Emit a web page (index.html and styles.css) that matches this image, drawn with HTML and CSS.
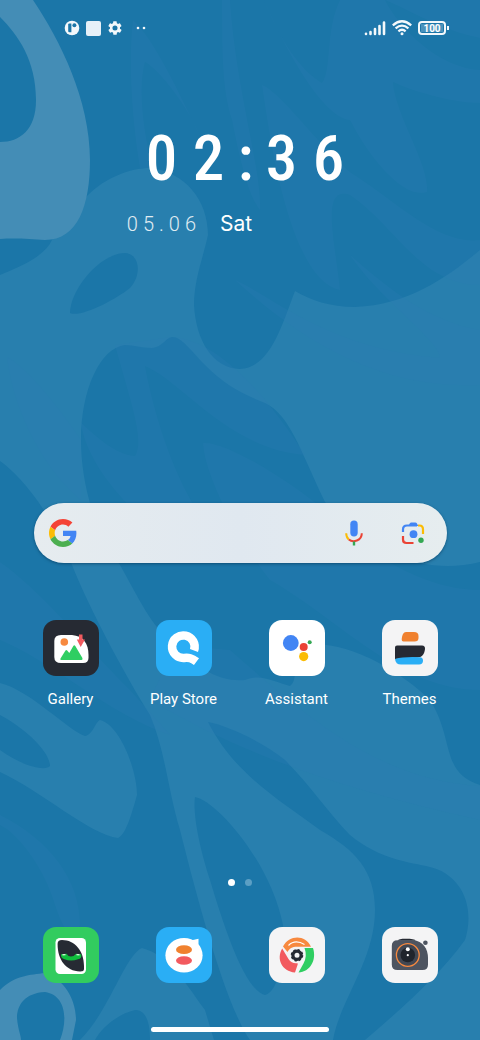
FILE: index.html
```
<!DOCTYPE html>
<html lang="en">
<head>
    <meta charset="UTF-8">
    <meta name="viewport" content="width=device-width, initial-scale=1.0">
    <title>Home screen</title>
    <link rel="stylesheet" href="styles.css">
</head>
<body>
    <!-- Wallpaper -->
    <svg class="wallpaper" viewBox="0 0 480 1040" preserveAspectRatio="xMidYMid slice" aria-hidden="true">
        <path class="light" d="M0 275C25 265 45 255 52 240C62 222 75 207 88 195C105 178 130 168 150 168C185 172 208 200 208 235C203 258 194 280 194 305C196 340 212 368 240 369C270 368 282 325 295 291C310 300 330 307 355 307C410 305 450 275 480 250V562C430 574 380 560 325 502C300 450 290 415 265 403C240 393 225 385 205 365C190 350 182 337 172 337C165 338 163 347 152 348C140 348 135 345 125 345C100 348 81 390 81 440C81 480 93 530 120 565C140 600 150 625 175 645C200 670 220 682 245 680C260 673 275 682 290 686C300 680 290 650 310 645C345 640 400 670 430 700C455 740 440 772 480 785V1040H250C225 1005 195 890 180 830C168 790 165 750 150 715C125 675 90 610 72 565C50 510 20 475 0 461Z"/>
        <path class="dark" d="M70 313C70 290 100 253 125 253C140 254 142 275 130 288C115 300 80 318 70 313Z"/>
        <path class="dark" d="M208 722C225 725 260 740 285 760C310 785 330 815 350 835C380 860 410 862 430 867C460 874 476 905 465 940C440 975 400 1010 365 1040H333C340 1000 375 960 375 910C375 870 355 850 320 830C280 800 235 775 208 722Z"/>
        <path class="dark" d="M195 797C215 800 270 860 283 925C285 960 278 992 265 995C245 990 225 930 210 880C197 840 193 810 195 797Z"/>
        <path class="light" d="M0 683C30 690 70 732 85 736C93 735 95 722 100 720C120 725 137 770 137 795C130 820 125 835 118 838C90 835 40 790 0 772V750C20 765 45 772 50 766C50 750 20 725 0 715Z"/>
        <path class="light" d="M80 1040C110 1010 125 955 142 948C170 955 190 990 205 1010L214 1040H150C150 1020 145 1010 135 1010C115 1015 100 1030 95 1040Z"/>
        <path class="pale" d="M33 0C60 40 90 100 90 160C90 205 78 240 45 240C30 239 15 238 0 239V142C20 142 36 130 36 100C36 60 18 35 0 17V0Z"/>
        <path class="pale" d="M0 990C15 975 30 975 45 973C65 980 76 1000 76 1020L72 1040H60C68 1020 66 995 45 992C25 993 17 1005 17 1018C18 1030 21 1035 21 1040H0Z"/>
        <g class="streaks">
            <path d="M222 0C222 50 222 90 232 120C240 160 248 195 260 210C262 170 236 90 230 0Z"/>
            <path d="M264 0C280 40 300 70 322 83C332 70 325 30 340 0H480V38C440 30 410 10 385 0C400 30 440 68 480 70V103C450 103 410 90 393 82C395 115 430 165 427 192C405 200 370 160 350 120C325 118 290 60 264 0Z"/>
            <path d="M133 20C128 60 132 120 140 168L153 168C145 140 137 90 145 62C160 70 190 110 200 136C180 95 155 40 133 20Z"/>
            <path d="M262 85C280 90 330 160 356 176C400 205 440 245 480 240V285C420 285 395 225 350 195C320 185 335 240 340 290C290 280 270 140 262 85Z"/>
            <path d="M235 280C270 295 330 350 440 358C440 340 380 300 350 255C390 290 430 322 480 330V385C380 390 300 340 235 280Z"/>
            <path d="M115 345C130 400 145 440 135 456C115 455 95 435 81 423C85 460 130 520 180 540H220C180 500 155 420 145 366C180 380 230 450 305 455C270 400 220 340 172 337Z"/>
            <path d="M203 443C230 440 320 500 345 530C390 570 440 590 480 590V690C400 690 340 620 270 580C245 550 205 480 203 443Z"/>
            <path d="M0 562C40 590 80 640 130 690L170 735C110 715 50 660 0 640Z"/>
            <path d="M150 700C220 740 300 780 480 820V786C380 780 310 720 230 650L175 645Z"/>
            <path d="M0 815C50 840 80 880 80 925C72 950 60 920 55 905C45 870 20 835 0 825Z"/>
            <path d="M7 357C30 370 60 410 81 440V500C50 475 15 420 7 357Z"/>
        </g>
    </svg>

    <!-- Status bar -->
    <header class="status-bar">
        <div class="notifications">
            <svg width="16" height="16" viewBox="0 0 16 16"><circle cx="8" cy="8" r="7.3" fill="#f3f8fb"/><path d="M4.2 4.6Q4.2 3.4 5.4 3.4H7.4V12.2H5.4Q4.2 12.2 4.2 11Z" fill="#1b76a8"/><circle cx="10.4" cy="5.3" r="2" fill="#1b76a8"/></svg>
            <span class="square-note"></span>
            <svg width="16" height="16" viewBox="0 0 24 24"><path fill="#f3f8fb" d="M19.400 13c0-.3.1-.6.1-1s0-.7-.1-1l2.100-1.700c.2-.1.200-.4.100-.6l-2-3.500c-.1-.2-.4-.3-.6-.2l-2.500 1c-.5-.4-1.100-.7-1.700-1l-.4-2.600c0-.2-.2-.4-.5-.4h-4c-.2 0-.4.200-.5.4l-.4 2.600c-.6.3-1.200.6-1.700 1l-2.500-1c-.2-.1-.5 0-.6.200l-2 3.500c-.1.200-.1.500.1.600L4.500 11c0 .3-.1.700-.1 1s0 .7.100 1l-2.100 1.700c-.2.100-.2.400-.1.600l2 3.500c.1.200.4.300.6.200l2.500-1c.5.400 1.100.7 1.700 1l.4 2.600c0 .2.200.4.500.4h4c.2 0 .5-.2.500-.4l.4-2.600c.6-.3 1.200-.6 1.700-1l2.500 1c.2.100.5 0 .6-.2l2-3.500c.1-.2.100-.5-.1-.6L19.400 13zM12 15.800a3.800 3.800 0 1 1 0-7.600 3.800 3.800 0 0 1 0 7.600z"/></svg>
            <svg width="12" height="16" viewBox="0 0 12 16" fill="#f3f8fb"><circle cx="3" cy="8" r="1.300"/><circle cx="9" cy="8" r="1.300"/></svg>
        </div>
        <div class="signals">
            <svg width="22" height="16" viewBox="0 0 22 16" stroke="#f3f8fb" stroke-width="2.600" stroke-linecap="round"><path d="M2 14V13.700M6.500 14V12M11 14V9M15.500 14V6M20 14V2.500"/></svg>
            <svg width="20" height="16" viewBox="0 0 20 16" fill="none" stroke="#f3f8fb" stroke-width="2.300"><path d="M.8 5.300Q10-2.800 19.200 5.300M3.600 8.400Q10 2.800 16.400 8.400M6.400 11.400Q10 8.200 13.600 11.400"/><circle cx="10" cy="13.700" r="1.500" fill="#f3f8fb" stroke="none"/></svg>
            <div class="battery"><span class="battery-level">100</span></div>
        </div>
    </header>

    <!-- Clock -->
    <section class="clock">
        <div class="time"><span>0</span><span>2</span><span class="colon">:</span><span>3</span><span>6</span></div>
        <div class="date">
            <div class="day"><span>0</span><span>5</span><span>.</span><span>0</span><span>6</span></div>
            <div class="weekday">Sat</div>
        </div>
    </section>

    <!-- Search -->
    <form class="search">
        <svg width="28" height="28" viewBox="0 0 48 48" aria-hidden="true"><path fill="#f44336" d="M24 9.500c3.500 0 6.700 1.200 9.200 3.600l6.900-6.900C35.900 2.400 30.500 0 24 0 14.600 0 6.500 5.400 2.600 13.200l8 6.200C12.400 13.700 17.700 9.500 24 9.500z"/><path fill="#4285f4" d="M47 24.600c0-1.600-.2-3.100-.4-4.600H24v9h12.900c-.6 3-2.200 5.500-4.700 7.200l7.700 6C44.400 38 47 31.800 47 24.600z"/><path fill="#fbbc05" d="M10.500 28.600c-.5-1.500-.8-3-.8-4.600s.3-3.100.8-4.600l-8-6.200C.9 16.500 0 20.100 0 24s.9 7.500 2.600 10.800z"/><path fill="#4caf50" d="M24 48c6.500 0 11.900-2.100 15.900-5.800l-7.700-6c-2.200 1.500-4.900 2.300-8.200 2.300-6.300 0-11.600-4.200-13.500-9.900l-8 6.200C6.500 42.600 14.600 48 24 48z"/></svg>
        <input type="text" aria-label="Search">
        <button type="button" aria-label="Voice search">
            <svg width="20" height="28" viewBox="0 0 20 28" fill="none"><rect x="6.300" y="1.500" width="7.400" height="16" rx="3.700" fill="#4285f4"/><path d="M2.200 14.200Q2.200 18.300 4.800 20.500" stroke="#fbbc05" stroke-width="2"/><path d="M4.800 20.500C9 24 17.800 21.800 17.800 14.200" stroke="#ea4335" stroke-width="2"/><path d="M10 22.500V26.500" stroke="#34a853" stroke-width="2.400"/></svg>
        </button>
        <button type="button" aria-label="Search with camera">
            <svg width="24" height="24" viewBox="0 0 24 24" fill="none" stroke-width="2.200"><path d="M2 11V8.500Q2 4.500 6 4.500H16" stroke="#4285f4"/><path d="M7.300 5L9 2Q9.400 1.400 10.200 1.400H14.400Q15.200 1.400 15.600 2L17.300 5Z" fill="#4285f4"/><path d="M17 4.500H18.500Q22 4.500 22 8.500V13" stroke="#fbbc05"/><path d="M2 15V18.500Q2 22 5.500 22H12.500" stroke="#ea4335"/><circle cx="12.500" cy="13.200" r="3.900" fill="#4285f4"/><circle cx="20" cy="19.300" r="2.700" fill="#34a853"/></svg>
        </button>
    </form>

    <!-- Apps -->
    <nav class="apps">
        <a href="#gallery">
            <svg class="icon" viewBox="0 0 56 56"><rect width="56" height="56" rx="13" fill="#262a33"/><path d="M18 15H29C40 16 45.500 23 45.500 35V38Q45.500 43 40 43H18Q11.300 43 11.300 37V21Q11.300 15 18 15Z" fill="#fff"/><circle cx="21.300" cy="22" r="3.800" fill="#f7893f"/><path d="M17.500 38.500L22.500 30.500Q23.300 29.500 24.200 30.500L26.300 33L30.300 26Q31.300 24.300 32.300 26L39.400 38Q40 40 38.500 40H18.300Q16.800 40 17.500 38.500Z" fill="#2fce62"/><path d="M36 14.500H39.500V19.500H42L37.700 27L33.800 19.500H36Z" fill="#f25a5f"/></svg>
            Gallery
        </a>
        <a href="#play-store">
            <svg class="icon" viewBox="0 0 56 56"><rect width="56" height="56" rx="13" fill="#2aaef5"/><path fill="none" stroke="#fff" stroke-width="8.500" d="M38 30.500A11.300 11.300 0 1 0 28 38C33 37.500 35.500 38 40.500 41.700"/><path fill="none" stroke="#2aaef5" stroke-width="1.800" d="M31 32Q37 31.500 42.500 34.500"/></svg>
            Play Store
        </a>
        <a href="#assistant">
            <svg class="icon" viewBox="0 0 56 56"><rect width="56" height="56" rx="13" fill="#fff"/><circle cx="21.800" cy="23" r="7.900" fill="#4285f4"/><circle cx="34.700" cy="27" r="4" fill="#ea4335"/><circle cx="40.700" cy="22.300" r="2" fill="#34a853"/><circle cx="34.700" cy="36.600" r="4.600" fill="#fbbc05"/></svg>
            Assistant
        </a>
        <a href="#themes">
            <svg class="icon" viewBox="0 0 56 56"><rect width="56" height="56" rx="13" fill="#f4f4f5"/><path d="M24 12H32Q36.500 12 36.500 16V18Q36.500 21.500 32.500 21.500H21.500Q19.500 21.500 19.700 19.500C20 15 21.500 12 24 12Z" fill="#f0812f"/><path d="M15 25.500H40Q43.300 25.500 43 29C42.500 34 40 37.500 35 37.500L13 39V27.500Q13 25.500 15 25.500Z" fill="#262a33"/><path d="M13 39Q22 36.500 38 37.300Q41 37.500 41 40.500Q41 44.500 37 44.500H19Q13.500 44.500 13 39Z" fill="#2aaef5"/></svg>
            Themes
        </a>
    </nav>

    <div class="pages"><span class="dot active"></span><span class="dot"></span></div>

    <!-- Dock -->
    <nav class="apps dock">
        <a href="#phone" aria-label="Phone">
            <svg class="icon" viewBox="0 0 56 56"><rect width="56" height="56" rx="13" fill="#32cc5f"/><rect x="12.500" y="11" width="30.500" height="36" rx="4.500" fill="#fff"/><path d="M14.600 17Q14.500 13 19 13C32 13 41 24 41 39V42Q41 44.600 37 44.500C23 44 14.600 33 14.600 17Z" fill="#262a33"/><path d="M18 27.200L23.500 26.800Q25 29.600 28 29.600Q31 29.600 33 26.800L38.300 27.200Q39 31.500 35 32.200Q28 34.800 21.500 32.200Q17.500 31 18 27.200Z" fill="#10bf3d"/><path d="M19.500 27.800L22.500 27.600M33.500 27.600L36.500 27.800" stroke="#c9f5d2" stroke-width="1.400"/></svg>
        </a>
        <a href="#messages" aria-label="Messages">
            <svg class="icon" viewBox="0 0 56 56"><rect width="56" height="56" rx="13" fill="#2aaef5"/><ellipse cx="28" cy="28.300" rx="18.600" ry="17.300" fill="#fff"/><path d="M34 13.500Q38 13 42.500 11.700V22Z" fill="#fff"/><ellipse cx="28" cy="22.700" rx="8" ry="4.400" fill="#f0812f"/><ellipse cx="28" cy="33.500" rx="8" ry="4.300" fill="#f25a5f"/></svg>
        </a>
        <a href="#chrome" aria-label="Chrome">
            <svg class="icon" viewBox="0 0 56 56"><rect width="56" height="56" rx="13" fill="#f4f4f5"/><path d="M14 19.500C20 8 36 7 42 19.700H28C23 19.700 20.500 21.500 18.500 25Z" fill="#f7893f"/><path d="M19.500 18.500Q26 12 35.500 17.500" fill="none" stroke="#fff" stroke-width="1.200"/><path d="M13.200 21.500L19.500 32Q23 37 28.300 36.200Q29.300 36.500 28.500 38L26 45.500C13 44.500 7 32 13.200 21.500Z" fill="#f25a5f"/><path d="M35.500 21H44C48 33 41 45 29.500 45.500L34.500 36.500Q38.500 29 35.500 21Z" fill="#2fce62"/><circle cx="28" cy="28.300" r="4.100" fill="none" stroke="#262a33" stroke-width="3.200"/><circle cx="28" cy="28.300" r="5.500" fill="none" stroke="#262a33" stroke-width="1.600" stroke-dasharray="2.300 2.020"/></svg>
        </a>
        <a href="#camera" aria-label="Camera">
            <svg class="icon" viewBox="0 0 56 56"><rect width="56" height="56" rx="13" fill="#f4f4f5"/><path d="M16 13.800C16 12 19 11.700 24 11.700S33.500 12 33.500 13.800Z" fill="#262a33"/><path d="M15.500 13.300H31C41 14 46 22 46 31V37.500Q46 43 40.500 43H15.500Q9.800 43 9.800 37.500V19Q9.800 13.300 15.500 13.300Z" fill="#4d5460"/><circle cx="25.800" cy="28" r="11.400" fill="#414752" stroke="#f7893f" stroke-width="1.300"/><circle cx="25.800" cy="28" r="7.300" fill="#20242c"/><circle cx="25.800" cy="22.200" r="2" fill="#fff"/><circle cx="25.800" cy="28.200" r="1.100" fill="#fff"/><circle cx="43.400" cy="15.700" r="2.300" fill="#4d5460"/></svg>
        </a>
    </nav>

    <div class="home-bar"></div>
</body>
</html>
```
FILE: styles.css
```
* {
    box-sizing: border-box;
}
body {
    margin: 0;
    min-height: 100vh;
    display: flex;
    flex-direction: column;
    background-color: #1b76a8;
    color: white;
    font-family: Roboto, sans-serif;
}
.wallpaper {
    position: absolute;
    top: 0;
    left: 0;
    width: 100%;
    height: 100%;
    z-index: -1;
}
.light {
    fill: #287fae;
}
.dark {
    fill: #1b76a8;
}
.pale {
    fill: #448db6;
}
.streaks {
    fill: #2c7cb4;
    opacity: 0.25;
}

.status-bar {
    display: flex;
    justify-content: space-between;
    padding: 20px 31px 0 64px;
}
.notifications, .signals {
    display: flex;
    align-items: center;
    gap: 6px;
}
.square-note {
    width: 15px;
    height: 15px;
    border-radius: 2px;
    background-color: #e6f0f8;
}
.notifications svg:last-child {
    margin-left: 6px;
}
.battery {
    position: relative;
    width: 28px;
    height: 14px;
    margin-right: 3px;
    padding: 1px;
    border: 2px solid #f3f8fb;
    border-radius: 4px;
}
.battery::after {
    content: "";
    position: absolute;
    top: 3px;
    right: -5px;
    width: 2px;
    height: 4px;
    background-color: #f3f8fb;
}
.battery-level {
    display: block;
    height: 8px;
    background-color: #4a92bb;
    font-size: 10px;
    font-weight: 700;
    line-height: 9px;
    text-align: center;
}

.clock {
    flex: 1;
    margin-top: 85px;
}
.time {
    display: flex;
    justify-content: center;
    gap: 11px;
    padding-left: 10px;
    font-family: "Roboto Condensed", Roboto, sans-serif;
    font-size: 63px;
    font-weight: 500;
    line-height: 76px;
    text-align: center;
}
.time span {
    width: 36px;
}
.time .colon {
    width: 15px;
}
.date {
    display: flex;
    justify-content: center;
    align-items: center;
    gap: 24px;
    margin-top: 15px;
    padding-right: 101px;
    line-height: 24px;
}
.day {
    display: flex;
    gap: 5px;
    font-size: 20px;
    font-weight: 300;
    opacity: 0.85;
}
.weekday {
    font-family: Inter, sans-serif;
    font-size: 21px;
}

.search {
    display: flex;
    align-items: center;
    height: 60px;
    margin: 0 33px 0 34px;
    padding: 0 20px 0 15px;
    border-radius: 30px;
    background: linear-gradient(90deg, #e6ecef, #e0e8f0 50%, #e6edef);
    box-shadow: 0 1px 3px rgba(0, 40, 70, 0.5);
}
.search input {
    flex: 1;
    min-width: 0;
    height: 40px;
    border: none;
    outline: none;
    background: none;
    font-size: 16px;
}
.search button {
    display: flex;
    justify-content: center;
    width: 28px;
    margin-left: 31px;
    padding: 0;
    border: none;
    background: none;
}

.apps {
    display: grid;
    grid-template-columns: repeat(4, 1fr);
    margin-top: 57px;
    padding: 0 14px;
}
.apps a {
    display: flex;
    flex-direction: column;
    align-items: center;
    gap: 13px;
    color: white;
    font-size: 15px;
    line-height: 20px;
    text-decoration: none;
}
.icon {
    width: 56px;
    height: 56px;
}
.pages {
    display: flex;
    justify-content: center;
    gap: 10px;
    margin-top: 170px;
}
.dot {
    width: 7px;
    height: 7px;
    border-radius: 50%;
    background-color: #5c9fc4;
}
.dot.active {
    background-color: white;
}
.dock {
    margin-top: 41px;
}
.home-bar {
    width: 37%;
    height: 5px;
    margin: 44px auto 8px;
    border-radius: 3px;
    background-color: white;
}
```
